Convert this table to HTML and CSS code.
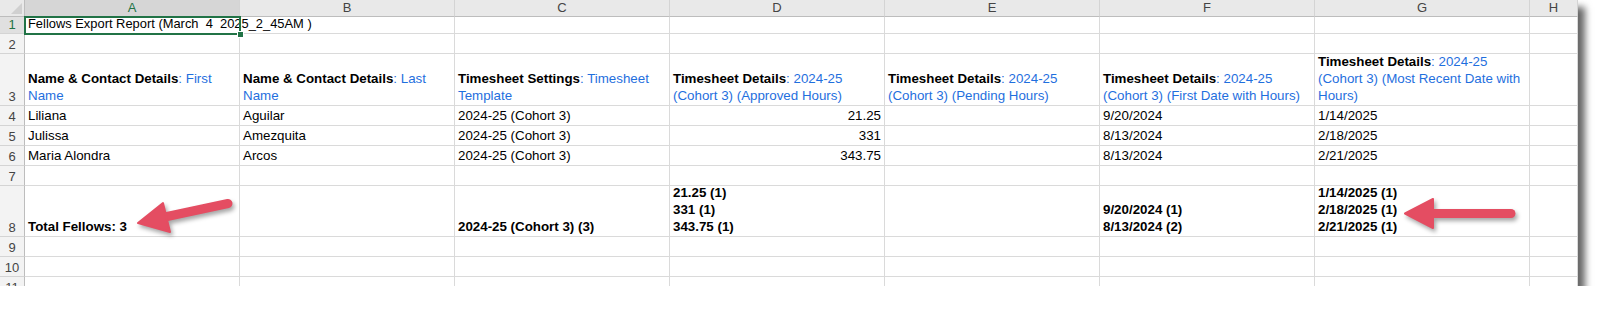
FILE: index.html
```html
<!DOCTYPE html>
<html>
<head>
<meta charset="utf-8">
<link rel="stylesheet" href="styles.css">
</head>
<body>
<div class="sheet">
  <div class="grid">
    <div class="corner"><span class="tri"></span></div>
    <div class="ch sel">A</div><div class="ch">B</div><div class="ch">C</div><div class="ch">D</div><div class="ch">E</div><div class="ch">F</div><div class="ch">G</div><div class="ch">H</div>

    <div class="rh sel">1</div>
    <div class="c over">Fellows Export Report (March&nbsp; 4&nbsp; 2025_2_45AM )</div><div class="c"></div><div class="c"></div><div class="c"></div><div class="c"></div><div class="c"></div><div class="c"></div><div class="c"></div>

    <div class="rh">2</div>
    <div class="c"></div><div class="c"></div><div class="c"></div><div class="c"></div><div class="c"></div><div class="c"></div><div class="c"></div><div class="c"></div>

    <div class="rh">3</div>
    <div class="c"><div class="w"><b>Name &amp; Contact Details</b><span class="bl">: First Name</span></div></div>
    <div class="c"><div class="w"><b>Name &amp; Contact Details</b><span class="bl">: Last Name</span></div></div>
    <div class="c"><div class="w"><b>Timesheet Settings</b><span class="bl">: Timesheet Template</span></div></div>
    <div class="c"><div class="w"><b>Timesheet Details</b><span class="bl">: 2024-25 (Cohort 3) (Approved Hours)</span></div></div>
    <div class="c"><div class="w"><b>Timesheet Details</b><span class="bl">: 2024-25 (Cohort 3) (Pending Hours)</span></div></div>
    <div class="c"><div class="w"><b>Timesheet Details</b><span class="bl">: 2024-25 (Cohort 3) (First Date with Hours)</span></div></div>
    <div class="c"><div class="w"><b>Timesheet Details</b><span class="bl">: 2024-25 (Cohort 3) (Most Recent Date with Hours)</span></div></div>
    <div class="c"></div>

    <div class="rh">4</div>
    <div class="c">Liliana</div><div class="c">Aguilar</div><div class="c">2024-25 (Cohort 3)</div><div class="c num">21.25</div><div class="c"></div><div class="c">9/20/2024</div><div class="c">1/14/2025</div><div class="c"></div>

    <div class="rh">5</div>
    <div class="c">Julissa</div><div class="c">Amezquita</div><div class="c">2024-25 (Cohort 3)</div><div class="c num">331</div><div class="c"></div><div class="c">8/13/2024</div><div class="c">2/18/2025</div><div class="c"></div>

    <div class="rh">6</div>
    <div class="c">Maria Alondra</div><div class="c">Arcos</div><div class="c">2024-25 (Cohort 3)</div><div class="c num">343.75</div><div class="c"></div><div class="c">8/13/2024</div><div class="c">2/21/2025</div><div class="c"></div>

    <div class="rh">7</div>
    <div class="c"></div><div class="c"></div><div class="c"></div><div class="c"></div><div class="c"></div><div class="c"></div><div class="c"></div><div class="c"></div>

    <div class="rh">8</div>
    <div class="c bold">Total Fellows: 3</div>
    <div class="c"></div>
    <div class="c bold">2024-25 (Cohort 3) (3)</div>
    <div class="c bold"><span>21.25 (1)</span><span>331 (1)</span><span>343.75 (1)</span></div>
    <div class="c"></div>
    <div class="c bold"><span>9/20/2024 (1)</span><span>8/13/2024 (2)</span></div>
    <div class="c bold"><span>1/14/2025 (1)</span><span>2/18/2025 (1)</span><span>2/21/2025 (1)</span></div>
    <div class="c"></div>

    <div class="rh">9</div>
    <div class="c"></div><div class="c"></div><div class="c"></div><div class="c"></div><div class="c"></div><div class="c"></div><div class="c"></div><div class="c"></div>

    <div class="rh">10</div>
    <div class="c"></div><div class="c"></div><div class="c"></div><div class="c"></div><div class="c"></div><div class="c"></div><div class="c"></div><div class="c"></div>

    <div class="rh">11</div>
    <div class="c"></div><div class="c"></div><div class="c"></div><div class="c"></div><div class="c"></div><div class="c"></div><div class="c"></div><div class="c"></div>
  </div>

  <div class="selection"><span class="handle"></span></div>

  <svg class="arrows" width="1578" height="286" viewBox="0 0 1578 286">
    <g fill="#e44d62" stroke="#e44d62" stroke-linecap="round" stroke-linejoin="round">
      <line x1="228" y1="203.5" x2="160" y2="218" stroke-width="9"/>
      <polygon points="138,223 163,203 170,232" stroke-width="2"/>
      <line x1="1511" y1="213.5" x2="1428" y2="213.5" stroke-width="9"/>
      <polygon points="1405,213.5 1433,199 1433,228" stroke-width="2"/>
    </g>
  </svg>
</div>
</body>
</html>
```

FILE: styles.css
```css
html, body {
  margin: 0;
  padding: 0;
  background: #ffffff;
}

.sheet {
  position: relative;
  width: 1578px;
  height: 286px;
  overflow: hidden;
  background: #ffffff;
  box-shadow: 7px 7px 7px rgba(0, 0, 0, 0.6);
  font-family: "Liberation Sans", Arial, sans-serif;
  font-size: 13.33px;
  color: #000;
}

.grid {
  display: grid;
  grid-template-columns: 25px repeat(7, 215px) 48px;
  grid-template-rows: 17px 17px 20px 52px 20px 20px 20px 20px 51px 20px 20px 20px;
}

.grid > div {
  box-sizing: border-box;
}

.corner {
  position: relative;
  background: #e9e9e9;
  border-right: 1px solid #bdbdbd;
  border-bottom: 1px solid #bdbdbd;
}

.tri {
  position: absolute;
  right: 2px;
  bottom: 2px;
  width: 0;
  height: 0;
  border-left: 11px solid transparent;
  border-bottom: 11px solid #d0d0d0;
}

.ch {
  background: #e9e9e9;
  border-right: 1px solid #d4d4d4;
  border-bottom: 1px solid #bdbdbd;
  color: #444;
  font-size: 13px;
  line-height: 16px;
  text-align: center;
}

.ch.sel {
  background: #d6d6d6;
  color: #217346;
}

.rh {
  display: flex;
  align-items: flex-end;
  justify-content: center;
  background: #f3f3f3;
  border-right: 1px solid #bdbdbd;
  border-bottom: 1px solid #d4d4d4;
  color: #444;
  font-size: 13px;
  line-height: 17px;
}

.rh.sel {
  background: #e0e0e0;
  color: #217346;
}

.c {
  display: flex;
  flex-direction: column;
  justify-content: flex-end;
  padding: 0 3px 1px 3px;
  border-right: 1px solid #dadada;
  border-bottom: 1px solid #dadada;
  line-height: 17px;
  white-space: nowrap;
  overflow: hidden;
  min-width: 0;
}

.c.over {
  overflow: visible;
  border-right-color: transparent;
  position: relative;
  z-index: 1;
  font-size: 12.9px;
  line-height: 16px;
}

.w {
  white-space: normal;
}

.bl {
  color: #1f6fde;
}

.c.num {
  align-items: flex-end;
}

.c.bold {
  font-weight: bold;
}

.selection {
  position: absolute;
  left: 24px;
  top: 16px;
  width: 217px;
  height: 19px;
  box-sizing: border-box;
  border: 2px solid #217346;
  z-index: 2;
}

.handle {
  position: absolute;
  right: -5px;
  bottom: -5px;
  width: 5px;
  height: 5px;
  background: #217346;
  border: 1px solid #ffffff;
}

.arrows {
  position: absolute;
  left: 0;
  top: 0;
  z-index: 3;
  filter: drop-shadow(2px 3px 2px rgba(0, 0, 0, 0.35));
}
```
